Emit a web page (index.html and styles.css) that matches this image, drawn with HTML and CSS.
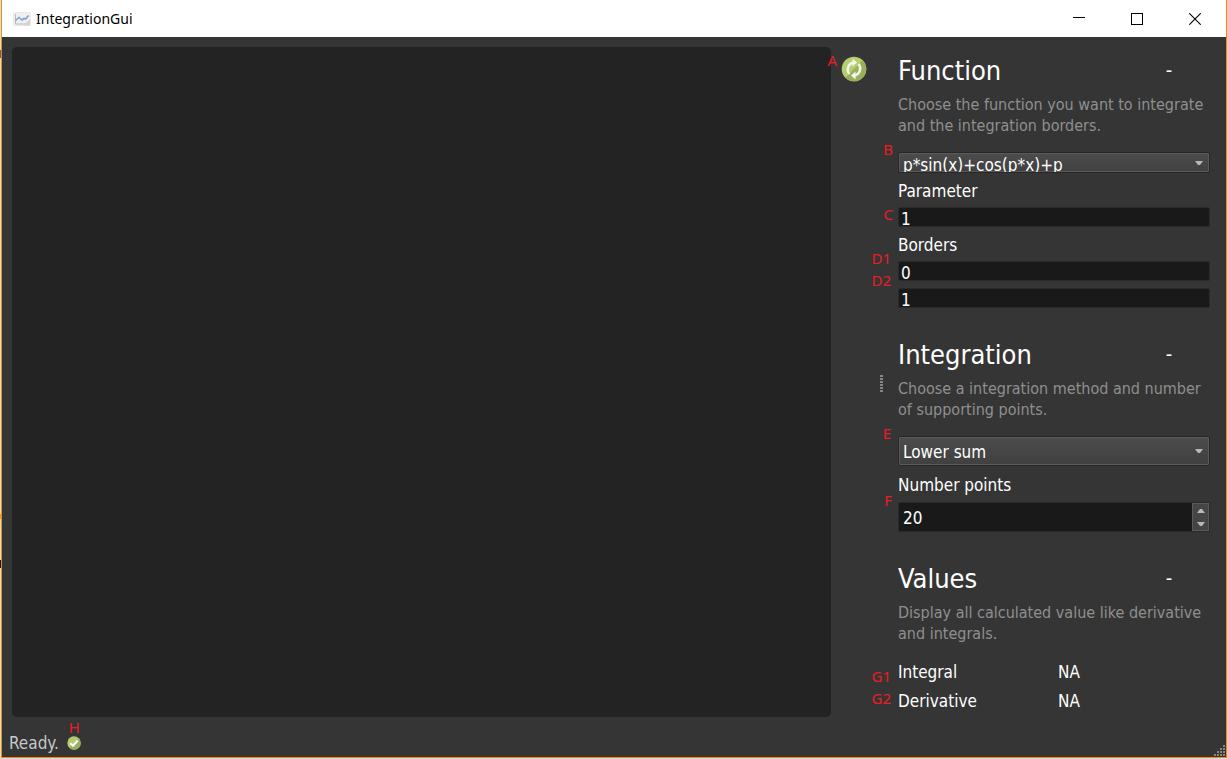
FILE: index.html
```html
<!DOCTYPE html>
<html lang="en">
<head>
<meta charset="utf-8">
<title>IntegrationGui</title>
<link rel="stylesheet" href="styles.css">
</head>
<body>
<div class="window">
  <header class="titlebar">
    <svg class="app-icon" width="18" height="14" viewBox="0 0 18 14" aria-hidden="true">
      <rect x="0.5" y="0.5" width="17" height="13" rx="1" fill="#f0efed" stroke="#e9e8e6"/>
      <path d="M2.5 2v10H16" fill="none" stroke="#bcbcbc"/>
      <path d="M11 12.500L17 7v6.500h-6z" fill="#d4d4d2"/>
      <path d="M2.500 8.500L6 5.500l3 2.500 2-1.500 1.500.5L15.500 3.500" fill="none" stroke="#7ea4d6" stroke-width="1.600"/>
    </svg>
    <span class="title">IntegrationGui</span>
    <div class="window-buttons">
      <button type="button" aria-label="Minimize"><svg width="12" height="12" viewBox="0 0 12 12"><path d="M0 4.500h12" stroke="#000"/></svg></button>
      <button type="button" aria-label="Maximize"><svg width="12" height="12" viewBox="0 0 12 12"><rect x="0.5" y="0.5" width="11" height="11" fill="none" stroke="#000"/></svg></button>
      <button type="button" aria-label="Close"><svg width="12" height="12" viewBox="0 0 12 12"><path d="M.3.3l11.400 11.400M11.700.3L.3 11.700" stroke="#000" stroke-width="1.100"/></svg></button>
    </div>
  </header>

  <main class="workspace">
    <div class="plot"></div>
    <div class="toolbar">
      <button type="button" class="refresh" aria-label="Refresh">
        <svg width="26" height="26" viewBox="0 0 26 26">
          <circle cx="13" cy="13" r="12.300" fill="#b5ce70"/>
          <path d="M21.700 4.300A12.300 12.300 0 0 1 4.300 21.700z" fill="#98af5d"/>
          <g fill="none" stroke="#f3f6e9" stroke-width="2.400">
            <path d="M8.500 18A7 7 0 0 1 12.500 6.500"/>
            <path d="M17.500 8A7 7 0 0 1 13.500 19.500"/>
          </g>
          <path d="M11.500 2.500L16 6.500l-4.500 4zM14.500 23.500L10 19.500l4.500-4z" fill="#f3f6e9"/>
        </svg>
      </button>
      <span class="mark mark-refresh">A</span>
    </div>
    <div class="splitter"><span class="grip"></span></div>

    <form class="panel">
      <section class="section">
        <div class="heading"><h2>Function</h2><button type="button" aria-label="Collapse Function">-</button></div>
        <p>Choose the function you want to integrate and the integration borders.</p>
        <div class="fields">
          <div class="field">
            <select class="select-small" aria-label="Function"><option>p*sin(x)+cos(p*x)+p</option></select>
            <svg class="arrow" width="8" height="4" viewBox="0 0 8 4"><path d="M0 0h8L5 4H3z" fill="#b8b8b8"/></svg>
            <span class="mark mark-high mark-letter">B</span>
          </div>
          <label for="parameter">Parameter</label>
          <div class="field"><input id="parameter" type="text" value="1"><span class="mark mark-mid mark-letter">C</span></div>
          <label for="lower">Borders</label>
          <div class="field"><input id="lower" type="text" value="0"><span class="mark mark-high">D1</span></div>
          <div class="field"><input type="text" value="1" aria-label="Upper border"><span class="mark mark-border">D2</span></div>
        </div>
      </section>

      <section class="section">
        <div class="heading"><h2>Integration</h2><button type="button" aria-label="Collapse Integration">-</button></div>
        <p>Choose a integration method and number of supporting points.</p>
        <div class="fields fields-wide">
          <div class="field">
            <select aria-label="Integration method"><option>Lower sum</option></select>
            <svg class="arrow" width="8" height="4" viewBox="0 0 8 4"><path d="M0 0h8L5 4H3z" fill="#b8b8b8"/></svg>
            <span class="mark mark-high">E</span>
          </div>
          <label for="points">Number points</label>
          <div class="field spin">
            <input id="points" type="number" value="20">
            <div class="steps">
              <button type="button" aria-label="Increase"><svg width="8" height="4" viewBox="0 0 8 4"><path d="M0 4h8L5 0H3z" fill="#b8b8b8"/></svg></button>
              <button type="button" aria-label="Decrease"><svg width="8" height="4" viewBox="0 0 8 4"><path d="M0 0h8L5 4H3z" fill="#b8b8b8"/></svg></button>
            </div>
            <span class="mark mark-high">F</span>
          </div>
        </div>
      </section>

      <section class="section">
        <div class="heading"><h2>Values</h2><button type="button" aria-label="Collapse Values">-</button></div>
        <p>Display all calculated value like derivative and integrals.</p>
        <dl class="values">
          <dt>Integral<span class="mark mark-integral">G1</span></dt><dd>NA</dd>
          <dt>Derivative<span class="mark mark-mid">G2</span></dt><dd>NA</dd>
        </dl>
      </section>
    </form>
  </main>

  <footer class="statusbar">
    <span>Ready.</span>
    <span class="state">
      <svg width="14" height="14" viewBox="0 0 14 14" aria-hidden="true">
        <circle cx="7" cy="7" r="6.700" fill="#b2cb6d"/>
        <path d="M11.800 2.300A6.700 6.700 0 0 1 2.300 11.800z" fill="#98af5d"/>
        <path d="M3.300 7.300L6 9.800l4.800-5.300" fill="none" stroke="#fff" stroke-width="2.200"/>
      </svg>
      <span class="mark mark-state">H</span>
    </span>
    <svg class="size-grip" width="12" height="12" viewBox="0 0 12 12" aria-hidden="true">
      <path d="M9 1h2M6 4h2M9 4h2M3 7h2M6 7h2M9 7h2M0 10h2M3 10h2M6 10h2M9 10h2" stroke="#858585" stroke-width="2"/>
    </svg>
  </footer>
</div>
</body>
</html>
```
FILE: styles.css
```css
* { box-sizing: border-box; }

body {
  margin: 0;
  height: 100vh;
  padding: 0 0 1px 1px;
  background: linear-gradient(#5b5b9b, #5b5b9b) 0 50px / 1px 8px no-repeat,
    linear-gradient(#111, #111) 0 560px / 1px 8px no-repeat,
    linear-gradient(#e0a040, #e0a040) 0 514px / 1px 5px no-repeat,
    #d9dbe0;
  color: #fff;
  font: 17px/20px "DejaVu Sans Condensed", "DejaVu Sans", sans-serif;
}

button, input, select { font: inherit; color: inherit; margin: 0; }
button { border: 0; padding: 0; background: none; }

.window {
  height: 100%;
  display: flex;
  flex-direction: column;
  background: #353535;
  border: 1px solid #e8920c;
  border-top: 0;
}

.titlebar {
  height: 37px;
  display: flex;
  align-items: center;
  gap: 5px;
  padding: 0 2px 0 11px;
  background: #fff;
  color: #000;
  font: 14px/20px "Noto Sans", sans-serif;
}
.window-buttons { display: flex; margin-left: auto; align-self: stretch; }
.window-buttons button { width: 58px; display: grid; place-items: center; }

.workspace { flex: 1; display: flex; padding: 10px 16px 0 10px; }
.plot { flex: 1; background: #232323; border-radius: 5px; }
.toolbar { position: relative; width: 46px; padding: 9px 0 0 10px; }
.refresh { display: block; height: 26px; }
.splitter { width: 21px; padding-top: 4px; display: flex; align-items: center; }
.grip {
  width: 3px;
  height: 18px;
  margin-left: 3px;
  background: repeating-linear-gradient(#858585 0 2px, transparent 2px 3px);
}

.panel { width: 312px; padding-top: 6px; display: flex; flex-direction: column; gap: 29px; }
.heading { display: flex; justify-content: space-between; height: 34px; }
.heading h2 { margin: 0; font-size: 27px; line-height: 36px; font-weight: 400; }
.heading button { width: 82px; font-size: 20px; }
.section p { margin: 7px 0 16px; color: #8f8f8f; font-size: 16px; line-height: 21px; }
.fields { display: flex; flex-direction: column; gap: 7px; }
.fields-wide { gap: 8px; }
.fields label { height: 20px; line-height: 22px; }
.field { position: relative; display: flex; }

.field input {
  width: 100%;
  height: 20px;
  padding: 3px 2px 0;
  border: 1px solid #2a2a2a;
  border-radius: 2px;
  background: #191919;
  outline: 0;
}
.field select {
  width: 100%;
  height: 30px;
  padding: 2px 4px 0;
  appearance: none;
  border: 1px solid #272727;
  border-radius: 2px;
  background: linear-gradient(#4c4c4c, #404040);
  box-shadow: inset 0 0 0 1px #5a5a5a;
}
.field .select-small { height: 21px; }
.arrow { position: absolute; right: 7px; top: calc(50% - 2px); }

.spin { height: 30px; background: #191919; border: 1px solid #2a2a2a; border-radius: 2px; }
.field input[type="number"] {
  flex: 1;
  height: 28px;
  border: 0;
  padding: 1px 4px 0;
  appearance: textfield;
}
.steps { width: 17px; display: flex; flex-direction: column; background: #454545; border: 1px solid #5a5a5a; }
.steps button { flex: 1; display: grid; place-items: center; }

.values { display: grid; grid-template-columns: 160px 1fr; row-gap: 9px; margin: 18px 0 0; }
.values dt { position: relative; }
.values dd { margin: 0; }

.mark {
  position: absolute;
  right: calc(100% + 7px);
  color: #ed1c24;
  font: 15px/20px "Noto Sans", sans-serif;
}
.mark-high { top: -13px; }
.mark-mid { top: -3px; }
.mark-border { top: -18px; }
.mark-integral { top: 4px; }
.mark-letter { right: calc(100% + 5px); }
.mark-refresh { top: 3px; right: 40px; }
.mark-state { top: -19px; right: 1px; }

.statusbar {
  height: 40px;
  display: flex;
  align-items: center;
  gap: 8px;
  padding: 12px 0 0 7px;
  color: #c8c8c8;
}
.state { position: relative; display: flex; }
.size-grip { margin-left: auto; align-self: flex-end; }
```
